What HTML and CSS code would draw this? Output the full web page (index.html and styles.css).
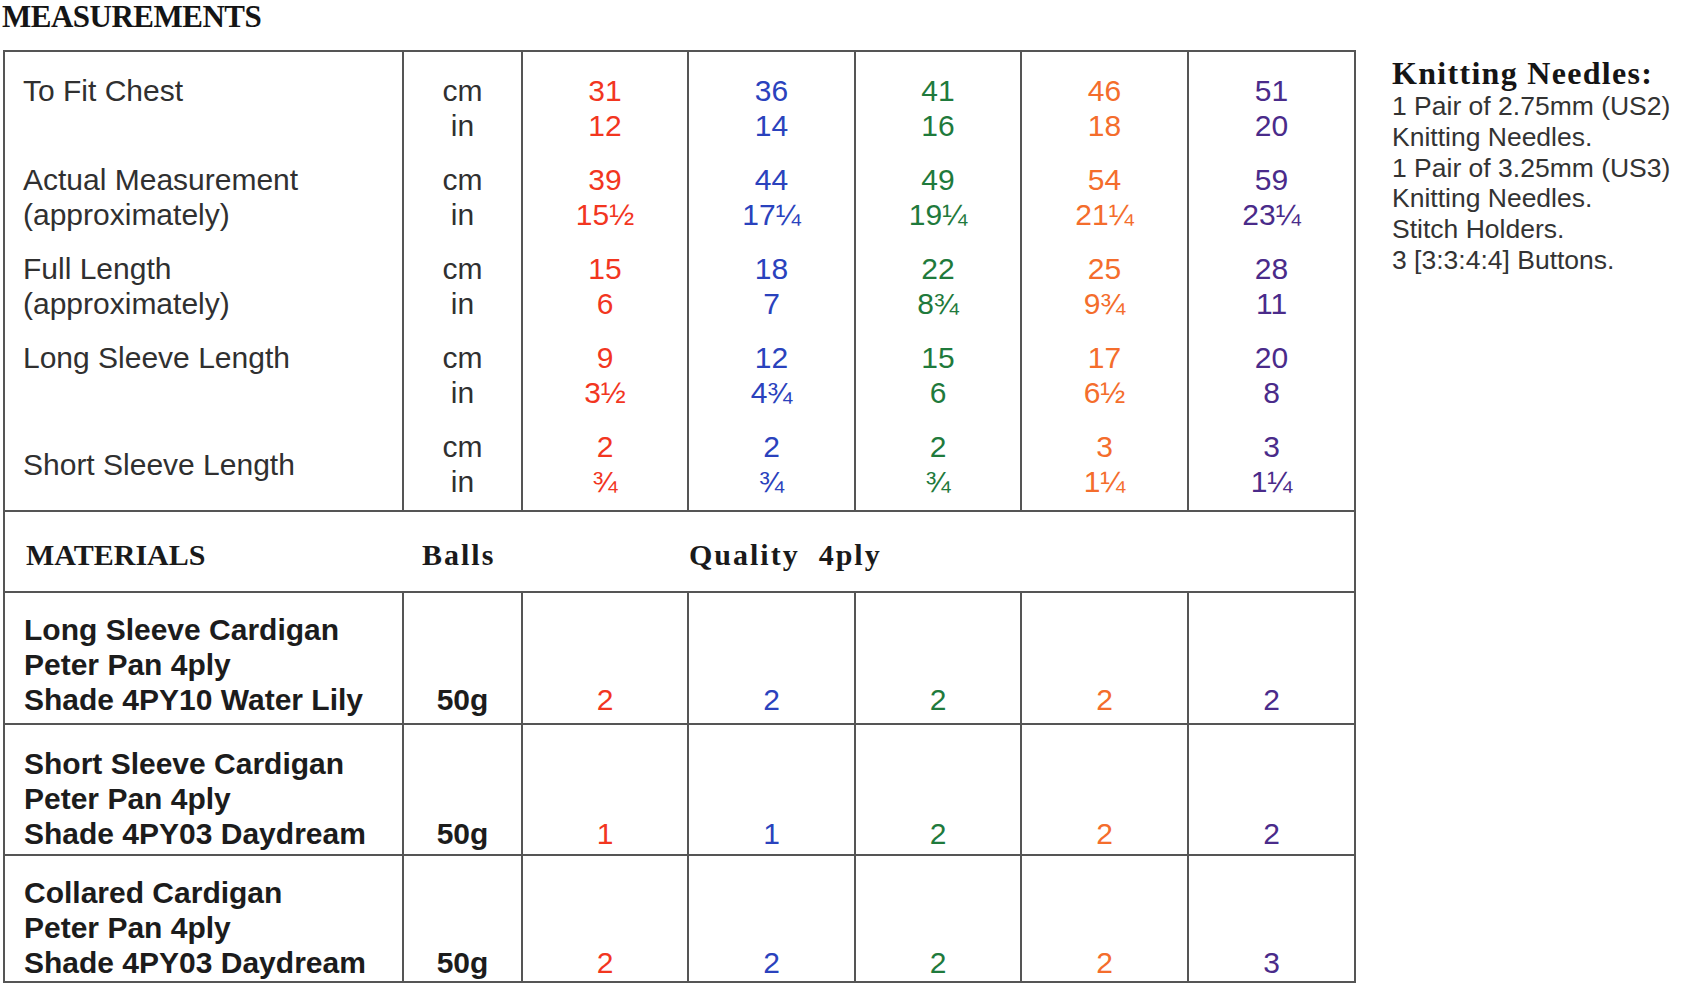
FILE: index.html
```html
<!DOCTYPE html>
<html lang="en">
<head>
<meta charset="utf-8">
<title>Measurements</title>
<link rel="stylesheet" href="styles.css">
</head>
<body>
<div class="page">
  <div class="main">
    <h1 class="title">MEASUREMENTS</h1>
    <table class="chart">
      <colgroup>
        <col class="c-label"><col class="c-unit"><col class="c-s1"><col class="c-s2"><col class="c-s3"><col class="c-s4"><col class="c-s5">
      </colgroup>
      <tbody class="meas">
        <tr class="m-row m-first">
          <td class="label">To Fit Chest</td>
          <td class="unit">cm<br>in</td>
          <td class="v s1">31<br>12</td>
          <td class="v s2">36<br>14</td>
          <td class="v s3">41<br>16</td>
          <td class="v s4">46<br>18</td>
          <td class="v s5">51<br>20</td>
        </tr>
        <tr class="m-row">
          <td class="label">Actual Measurement<br>(approximately)</td>
          <td class="unit">cm<br>in</td>
          <td class="v s1">39<br>15½</td>
          <td class="v s2">44<br>17¼</td>
          <td class="v s3">49<br>19¼</td>
          <td class="v s4">54<br>21¼</td>
          <td class="v s5">59<br>23¼</td>
        </tr>
        <tr class="m-row">
          <td class="label">Full Length<br>(approximately)</td>
          <td class="unit">cm<br>in</td>
          <td class="v s1">15<br>6</td>
          <td class="v s2">18<br>7</td>
          <td class="v s3">22<br>8¾</td>
          <td class="v s4">25<br>9¾</td>
          <td class="v s5">28<br>11</td>
        </tr>
        <tr class="m-row">
          <td class="label">Long Sleeve Length</td>
          <td class="unit">cm<br>in</td>
          <td class="v s1">9<br>3½</td>
          <td class="v s2">12<br>4¾</td>
          <td class="v s3">15<br>6</td>
          <td class="v s4">17<br>6½</td>
          <td class="v s5">20<br>8</td>
        </tr>
        <tr class="m-row m-last">
          <td class="label label-mid">Short Sleeve Length</td>
          <td class="unit">cm<br>in</td>
          <td class="v s1">2<br>¾</td>
          <td class="v s2">2<br>¾</td>
          <td class="v s3">2<br>¾</td>
          <td class="v s4">3<br>1¼</td>
          <td class="v s5">3<br>1¼</td>
        </tr>
      </tbody>
      <tbody class="mats">
        <tr class="mat-head">
          <td class="mh-label">MATERIALS</td>
          <td class="mh-balls" colspan="2">Balls</td>
          <td class="mh-quality" colspan="4">Quality&nbsp;&nbsp;4ply</td>
        </tr>
        <tr class="mat-row r1">
          <td class="mlabel">Long Sleeve Cardigan<br>Peter Pan 4ply<br>Shade 4PY10 Water Lily</td>
          <td class="mweight">50g</td>
          <td class="mv s1">2</td>
          <td class="mv s2">2</td>
          <td class="mv s3">2</td>
          <td class="mv s4">2</td>
          <td class="mv s5">2</td>
        </tr>
        <tr class="mat-row r2">
          <td class="mlabel">Short Sleeve Cardigan<br>Peter Pan 4ply<br>Shade 4PY03 Daydream</td>
          <td class="mweight">50g</td>
          <td class="mv s1">1</td>
          <td class="mv s2">1</td>
          <td class="mv s3">2</td>
          <td class="mv s4">2</td>
          <td class="mv s5">2</td>
        </tr>
        <tr class="mat-row r3">
          <td class="mlabel">Collared Cardigan<br>Peter Pan 4ply<br>Shade 4PY03 Daydream</td>
          <td class="mweight">50g</td>
          <td class="mv s1">2</td>
          <td class="mv s2">2</td>
          <td class="mv s3">2</td>
          <td class="mv s4">2</td>
          <td class="mv s5">3</td>
        </tr>
      </tbody>
    </table>
  </div>
  <aside class="notes">
    <h2 class="notes-title">Knitting Needles:</h2>
    <p class="notes-line">1 Pair of 2.75mm (US2)</p>
    <p class="notes-line">Knitting Needles.</p>
    <p class="notes-line">1 Pair of 3.25mm (US3)</p>
    <p class="notes-line">Knitting Needles.</p>
    <p class="notes-line">Stitch Holders.</p>
    <p class="notes-line">3 [3:3:4:4] Buttons.</p>
  </aside>
</div>
</body>
</html>
```

FILE: styles.css
```css
* {
  box-sizing: border-box;
}

html, body {
  margin: 0;
  padding: 0;
  background: #ffffff;
}

body {
  font-family: "Liberation Sans", Arial, sans-serif;
  color: #2a2a2a;
}

.page {
  display: flex;
  align-items: flex-start;
  width: 1700px;
  height: 1000px;
  overflow: hidden;
}

.main {
  padding-left: 2px;
  flex: none;
}

.title {
  margin: 0 0 17px 0;
  height: 33px;
  font-family: "Liberation Serif", "Times New Roman", serif;
  font-weight: bold;
  font-size: 31px;
  line-height: 33px;
  letter-spacing: -0.5px;
  color: #151515;
}

.chart {
  border-collapse: collapse;
  table-layout: fixed;
  width: 1351px;
  margin-left: 1px;
  border: 2px solid #555555;
}

.c-label { width: 399px; }
.c-unit { width: 119px; }
.c-s1 { width: 166px; }
.c-s2 { width: 167px; }
.c-s3 { width: 166px; }
.c-s4 { width: 167px; }
.c-s5 { width: 167px; }

.chart td {
  border-left: 2px solid #555555;
  border-right: 2px solid #555555;
  padding: 0;
  vertical-align: top;
}

/* Measurements section */
.m-row td {
  border-top: none;
  border-bottom: none;
  font-size: 30px;
  line-height: 35px;
  padding-top: 19px;
}

.m-first td {
  padding-top: 21px;
}

.m-last td {
  padding-bottom: 11px;
}

.label {
  padding-left: 18px !important;
  color: #303030;
}

.label-mid {
  vertical-align: middle !important;
}

.unit {
  text-align: center;
  color: #303030;
}

.v {
  text-align: center;
}

.s1 { color: #f2361f; }
.s2 { color: #2a42bd; }
.s3 { color: #1f7a3c; }
.s4 { color: #f46d2c; }
.s5 { color: #4a2b8a; }

/* Materials header */
.mat-head td {
  border-top: 2px solid #555555;
  border-bottom: 2px solid #555555;
  border-left: none;
  border-right: none;
  height: 81px;
  vertical-align: middle;
  padding-top: 6px;
  font-family: "Liberation Serif", "Times New Roman", serif;
  font-weight: bold;
  font-size: 30px;
  line-height: 34px;
  color: #1a1a1a;
}

.mh-label {
  padding-left: 21px !important;
}

.mh-balls {
  padding-left: 19px !important;
  letter-spacing: 2px;
}

.mh-quality {
  padding-left: 1px !important;
  letter-spacing: 2px;
}

/* Materials rows */
.mat-row td {
  border-top: 2px solid #555555;
  border-bottom: 2px solid #555555;
  font-size: 30px;
  line-height: 35px;
  vertical-align: bottom;
}

.mat-row.r1 td { height: 132px; padding-bottom: 6px; }
.mat-row.r2 td { height: 131px; padding-bottom: 3px; }
.mat-row.r3 td { height: 127px; padding-bottom: 1px; }

.mlabel {
  padding-left: 19px !important;
  font-weight: bold;
  color: #1c1c1c;
}

.mweight {
  text-align: center;
  font-weight: bold;
  color: #1c1c1c;
}

.mv {
  text-align: center;
}

/* Notes */
.notes {
  margin-left: 36px;
  padding-top: 55px;
  flex: none;
}

.notes-title {
  margin: 0;
  font-family: "Liberation Serif", "Times New Roman", serif;
  font-weight: bold;
  font-size: 32px;
  line-height: 36px;
  letter-spacing: 1.3px;
  color: #151515;
}

.notes-line {
  margin: 0;
  font-size: 26.5px;
  line-height: 30.8px;
  color: #333333;
}
```
